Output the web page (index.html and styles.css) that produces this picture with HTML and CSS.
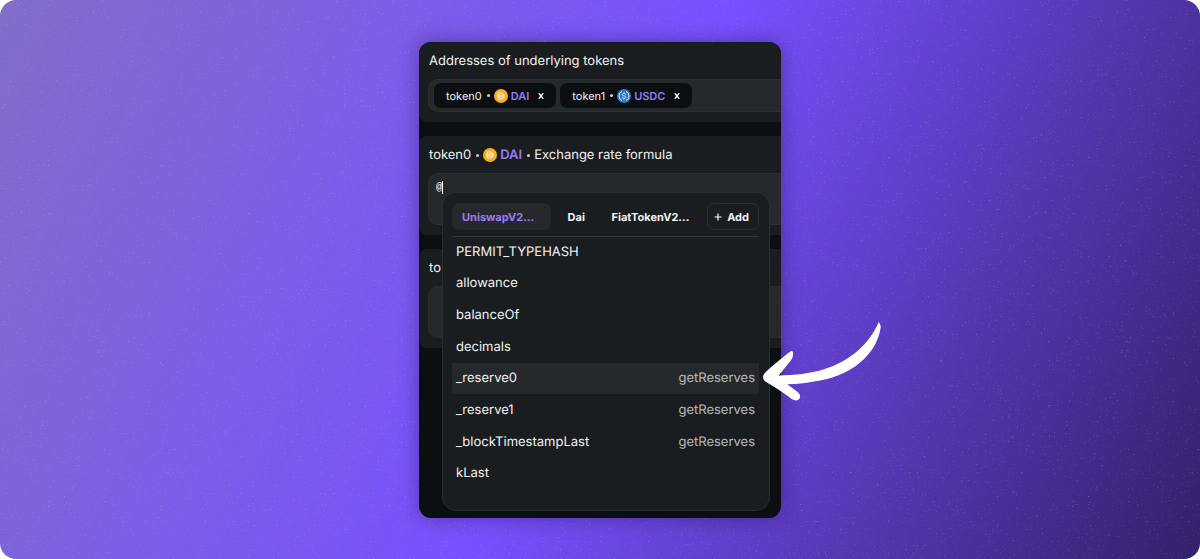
FILE: index.html
```html
<!DOCTYPE html>
<html lang="en">
<head>
<meta charset="utf-8">
<title>Exchange rate formula</title>
<link rel="stylesheet" href="styles.css">
</head>
<body>
<svg class="defs" width="0" height="0" aria-hidden="true">
  <symbol id="dai" viewBox="0 0 14 14">
    <circle cx="7" cy="7" r="7" fill="#f9ae2b"/>
    <path d="M4.4 3.9h2.4a3.1 3.1 0 0 1 0 6.2H4.4zM3 6.1h8M3 7.9h8" fill="none" stroke="#fff3d8" stroke-width="0.9"/>
  </symbol>
  <symbol id="usdc" viewBox="0 0 14 14">
    <circle cx="7" cy="7" r="7" fill="#2f78cc"/>
    <path d="M5 2.4a5 5 0 0 0 0 9.2M9 2.4a5 5 0 0 1 0 9.2" fill="none" stroke="#d8e8fb" stroke-width="1"/>
    <path d="M8.7 5.6C8.5 4.8 7.9 4.5 7 4.5c-1 0-1.7.4-1.7 1.2C5.3 7.3 8.7 6.5 8.7 8.2c0 .8-.7 1.3-1.7 1.3S5.4 9.1 5.2 8.3M7 3.5v1M7 9.5v1" fill="none" stroke="#d8e8fb" stroke-width="0.9"/>
  </symbol>
  <symbol id="cross" viewBox="0 0 6 6">
    <path d="M0.8 0.3 5.2 5.7M5.2 0.3 0.8 5.7" fill="none" stroke="#fff" stroke-width="1.4"/>
  </symbol>
</svg>
<main class="stage">
  <svg class="grain" aria-hidden="true">
    <filter id="speckle" x="0" y="0" width="100%" height="100%">
      <feTurbulence type="fractalNoise" baseFrequency="0.75" numOctaves="2" seed="4"/>
      <feColorMatrix values="0 0 0 0 0.85  0 0 0 0 0.82  0 0 0 0 0.9  6 0 0 0 -4.1"/>
    </filter>
    <rect width="100%" height="100%" filter="url(#speckle)"/>
  </svg>
  <div class="card-wrap">
    <div class="card">
      <div class="panels">
        <section class="panel">
          <h2 class="title">Addresses of underlying tokens</h2>
          <div class="field chips">
            <span class="chip">token0 <i class="dot"></i><svg class="coin"><use href="#dai"/></svg><b class="sym">DAI</b><button class="remove" aria-label="Remove DAI"><svg class="x"><use href="#cross"/></svg></button></span>
            <span class="chip">token1 <i class="dot"></i><svg class="coin"><use href="#usdc"/></svg><b class="sym">USDC</b><button class="remove" aria-label="Remove USDC"><svg class="x"><use href="#cross"/></svg></button></span>
          </div>
        </section>
        <section class="panel">
          <label class="title" for="f0">token0 <i class="dot"></i><svg class="coin"><use href="#dai"/></svg><b class="sym">DAI</b><i class="dot"></i>Exchange rate formula</label>
          <div class="editor">
            <textarea class="field formula" id="f0">@</textarea>
            <span class="caret"></span>
          </div>
        </section>
        <section class="panel">
          <label class="title" for="f1">to</label>
          <div class="editor">
            <textarea class="field formula" id="f1"></textarea>
          </div>
        </section>
      </div>
      <div class="popup">
        <div class="tabs">
          <button class="tab wide active">UniswapV2...</button>
          <button class="tab">Dai</button>
          <button class="tab wide">FiatTokenV2...</button>
          <button class="tab add"><svg class="plus" viewBox="0 0 8 8"><path d="M4 0.5v7M0.5 4h7" stroke="#fff" stroke-width="1.2"/></svg>Add</button>
        </div>
        <div class="list">
          <button class="item">PERMIT_TYPEHASH</button>
          <button class="item">allowance</button>
          <button class="item">balanceOf</button>
          <button class="item">decimals</button>
          <button class="item selected">_reserve0<span class="source">getReserves</span></button>
          <button class="item">_reserve1<span class="source">getReserves</span></button>
          <button class="item">_blockTimestampLast<span class="source">getReserves</span></button>
          <button class="item">kLast</button>
        </div>
      </div>
    </div>
    <svg class="arrow" viewBox="0 0 124 84" aria-hidden="true">
      <path fill="#fff" d="M118.700 2C119.600 3 120.800 5 120.700 7.500C119 17 116 24 111.700 30C99 48 79 57 60 60.500C48 63 38 64 27.300 64.300L37 71.500C40 74 41 76 39.500 78.500C38 81 35 81 31.700 79C24 73 15 67 7 62.500C2.500 60 2 56 5 52.700C13 45 22 38 30 31.700C32 30.500 33 31 33 33.500C33.200 37 32 39 30 41.500L18.700 55.500C35 55.200 50 53.500 63.300 49.500C91 41 110 23 118.700 2Z"/>
    </svg>
  </div>
</main>
</body>
</html>
```
FILE: styles.css
```css
* {
  box-sizing: border-box;
}

body {
  margin: 0;
  background: #fff;
  color: #f2f3f3;
  font-family: Inter, "Liberation Sans", sans-serif;
  font-size: 13px;
  text-rendering: geometricPrecision;
}

button,
textarea {
  margin: 0;
  padding: 0;
  border: 0;
  background: none;
  color: inherit;
  font: inherit;
  text-rendering: inherit;
}

.defs {
  position: absolute;
}

.stage {
  position: relative;
  display: flex;
  align-items: center;
  justify-content: center;
  min-height: 100vh;
  padding-top: 1px;
  overflow: hidden;
  border-radius: 16px;
  background: linear-gradient(116deg, #826dc8, #7950ff 50%, #33206a);
}

.grain {
  position: absolute;
  inset: 0;
  width: 100%;
  height: 100%;
  opacity: 0.22;
}

.card-wrap {
  position: relative;
  width: 362px;
  max-width: 100%;
}

.card {
  display: grid;
  overflow: hidden;
  border-radius: 12px;
  background: #0c0f12;
  box-shadow: 0 0 20px rgba(20, 10, 60, 0.4);
}

.panels,
.popup {
  grid-area: 1 / 1;
}

.panels {
  display: flex;
  flex-direction: column;
  gap: 14px;
}

.panel {
  display: flex;
  flex-direction: column;
  gap: 8px;
  padding: 9px 0 10px 9px;
  border-radius: 8px 0 0 8px;
  background: #1a1d1f;
}

.title {
  display: flex;
  align-items: center;
  gap: 4px;
  margin: 0;
  padding-left: 1px;
  font-size: 13px;
  font-weight: 400;
  line-height: 20px;
}

.dot {
  width: 3px;
  height: 3px;
  margin-left: 1px;
  border-radius: 50%;
  background: #c9d0d3;
}

.coin {
  width: 14px;
  height: 14px;
  margin-right: -1px;
}

.sym {
  color: #9b7bf5;
  font-weight: 600;
}

.field {
  border: solid #2b2f32;
  border-width: 1px 0 1px 1px;
  border-radius: 10px 0 0 10px;
  background: #25292c;
}

.chips {
  display: flex;
  gap: 4px;
  padding: 3px 5px;
}

.chip {
  display: flex;
  align-items: center;
  gap: 4px;
  height: 25px;
  padding: 0 12px;
  border-radius: 7px;
  background: #0c0f12;
  font-size: 11px;
}

.remove {
  display: flex;
  margin-left: 5px;
}

.x {
  width: 6px;
  height: 6px;
}

.editor {
  position: relative;
  display: flex;
}

.formula {
  width: 100%;
  height: 52px;
  padding: 6px 7px;
  outline: 0;
  resize: none;
  font-family: "Liberation Mono", monospace;
  font-size: 11px;
  line-height: 16px;
}

.caret {
  position: absolute;
  top: 8px;
  left: 14px;
  width: 1px;
  height: 13px;
  background: #fff;
}

.popup {
  z-index: 1;
  margin: 150px 11px 7px 23px;
  padding: 10px 10px 21px 9px;
  border: 1px solid #2a2d30;
  border-radius: 14px;
  background: #1a1d1f;
}

.tabs {
  display: flex;
  justify-content: space-between;
  padding-bottom: 6px;
  border-bottom: 1px solid #34373a;
}

.tab {
  height: 27px;
  padding: 0 10px;
  border-radius: 7px;
  font-size: 11px;
  font-weight: 700;
  text-align: left;
}

.wide {
  width: 99px;
}

.active {
  background: #25292c;
  color: #9b7bf5;
}

.add {
  display: flex;
  align-items: center;
  gap: 5px;
  padding: 0 9px 0 6px;
  border: 1px solid #2a2d30;
}

.plus {
  width: 8px;
  height: 8px;
}

.list {
  display: grid;
  grid-auto-rows: 1fr;
  min-height: 253px;
  margin-top: -1px;
}

.item {
  display: flex;
  align-items: center;
  justify-content: space-between;
  padding: 0 4px;
}

.selected {
  background: #25292c;
}

.source {
  color: #b4bcc0;
}

.arrow {
  position: absolute;
  z-index: 2;
  top: 278px;
  left: 341px;
  width: 124px;
  height: 84px;
}
```
